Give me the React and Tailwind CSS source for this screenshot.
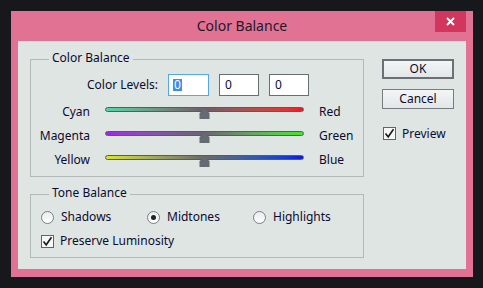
import React from "react";

const font = { fontFamily: '"Noto Sans", "Open Sans", sans-serif' };

function Slider({ left, right, gradient }) {
  return (
    <div className="grid grid-cols-[59px_199px_auto] gap-x-[15px] h-[24px] items-center">
      <span className="text-right">{left}</span>
      <div className="relative h-full">
        <div className={`mt-[7px] h-[5px] rounded-full border border-[#5a5a66] ${gradient}`} />
        {/* thumb */}
        <svg className="absolute left-[94px] top-[9px]" width="11" height="10" viewBox="0 0 11 10">
          <path d="M5.5 0 L10.5 4 L10.5 10 L0.5 10 L0.5 4 Z" fill="#646b72" />
        </svg>
      </div>
      <span>{right}</span>
    </div>
  );
}

function Radio({ checked, label }) {
  return (
    <div className="flex items-center gap-[7px]">
      <span className="w-[13px] h-[13px] rounded-full border border-[#7a7f84] bg-gradient-to-b from-[#e8ecec] to-[#ffffff] flex items-center justify-center">
        {checked && <span className="w-[5px] h-[5px] rounded-full bg-[#222]" />}
      </span>
      <span>{label}</span>
    </div>
  );
}

function Check({ label }) {
  return (
    <div className="flex items-center gap-[6px]">
      <span className="w-[13px] h-[13px] border border-[#5f6468] bg-[#f6f8f8] flex items-center justify-center">
        <svg width="11" height="11" viewBox="0 0 11 11">
          <path d="M1.5 5.5 L4.2 8.8 L9.5 1.2" fill="none" stroke="#1a1a1a" strokeWidth="1.6" />
        </svg>
      </span>
      <span>{label}</span>
    </div>
  );
}

export default function App() {
  return (
    <div className="w-[483px] h-[288px] bg-[#16181b] pt-[11px] pl-[11px]" style={font}>
      <div className="w-[462px] h-[266px] bg-[#e17293] flex flex-col">
        {/* Title bar */}
        <div className="h-[30px] grid grid-cols-[1fr_auto_1fr]">
          <div />
          <div className="text-[14px] text-[#221a2a] leading-[30px]">Color Balance</div>
          <div className="flex justify-end pr-[7px]">
            <div className="w-[31px] h-[21px] bg-[#d2365f] flex items-center justify-center">
              <svg width="9" height="9" viewBox="0 0 9 9">
                <path d="M1 1 L8 8 M8 1 L1 8" stroke="#ffffff" strokeWidth="1.8" />
              </svg>
            </div>
          </div>
        </div>

        {/* Content */}
        <div className="mx-[7px] h-[228px] bg-[#dfe5e3] flex text-[12px] text-[#0b0b2e] leading-none">
          <div className="ml-[12px] mt-[18px] w-[334px]">
            {/* Color Balance group */}
            <div className="relative h-[118px] border border-[#b2b9b8] pt-[14px]">
              <span className="absolute -top-[8px] left-[18px] px-[3px] bg-[#dfe5e3]">Color Balance</span>
              <div className="flex items-center">
                <span className="w-[127px] text-right">Color Levels:</span>
                <div className="ml-[10px] flex gap-[10px]">
                  <div className="w-[41px] h-[22px] bg-white border border-[#56a8e0] flex items-center pl-[4px]">
                    <span className="bg-[#3c8fe8] text-white px-[1px]">0</span>
                  </div>
                  <div className="w-[40px] h-[22px] bg-white border border-[#6a6e72] flex items-center pl-[5px]">0</div>
                  <div className="w-[40px] h-[22px] bg-white border border-[#6a6e72] flex items-center pl-[5px]">0</div>
                </div>
              </div>
              <div className="mt-[4px]">
                <Slider left="Cyan" right="Red" gradient="bg-gradient-to-r from-[#4fd6a6] via-[#6d5c66] to-[#f4101c]" />
                <Slider left="Magenta" right="Green" gradient="bg-gradient-to-r from-[#a022e6] via-[#6a6470] to-[#3ee81c]" />
                <Slider left="Yellow" right="Blue" gradient="bg-gradient-to-r from-[#dae61a] via-[#6a6a68] to-[#1010ea]" />
              </div>
            </div>

            {/* Tone Balance group */}
            <div className="relative mt-[17px] h-[64px] border border-[#b2b9b8] pt-[10px] pl-[10px]">
              <span className="absolute -top-[8px] left-[18px] px-[3px] bg-[#dfe5e3]">Tone Balance</span>
              <div className="h-[24px] flex items-center">
                <div className="w-[106px]"><Radio label="Shadows" /></div>
                <div className="w-[106px]"><Radio checked label="Midtones" /></div>
                <Radio label="Highlights" />
              </div>
              <div className="h-[24px] flex items-center">
                <Check label="Preserve Luminosity" />
              </div>
            </div>
          </div>

          {/* Buttons */}
          <div className="ml-[18px] mt-[18px] w-[72px] flex flex-col">
            <button className="h-[20px] border-2 border-[#6b7075] bg-gradient-to-b from-[#f4f6f6] to-[#e2e6e6] text-[12px] text-[#0b0b2e]">OK</button>
            <button className="mt-[10px] h-[20px] border border-[#777c80] bg-gradient-to-b from-[#f4f6f6] to-[#e2e6e6] text-[12px] text-[#0b0b2e]">Cancel</button>
            <div className="mt-[18px] ml-[1px] text-[12px]">
              <Check label="Preview" />
            </div>
          </div>
        </div>
      </div>
    </div>
  );
}
